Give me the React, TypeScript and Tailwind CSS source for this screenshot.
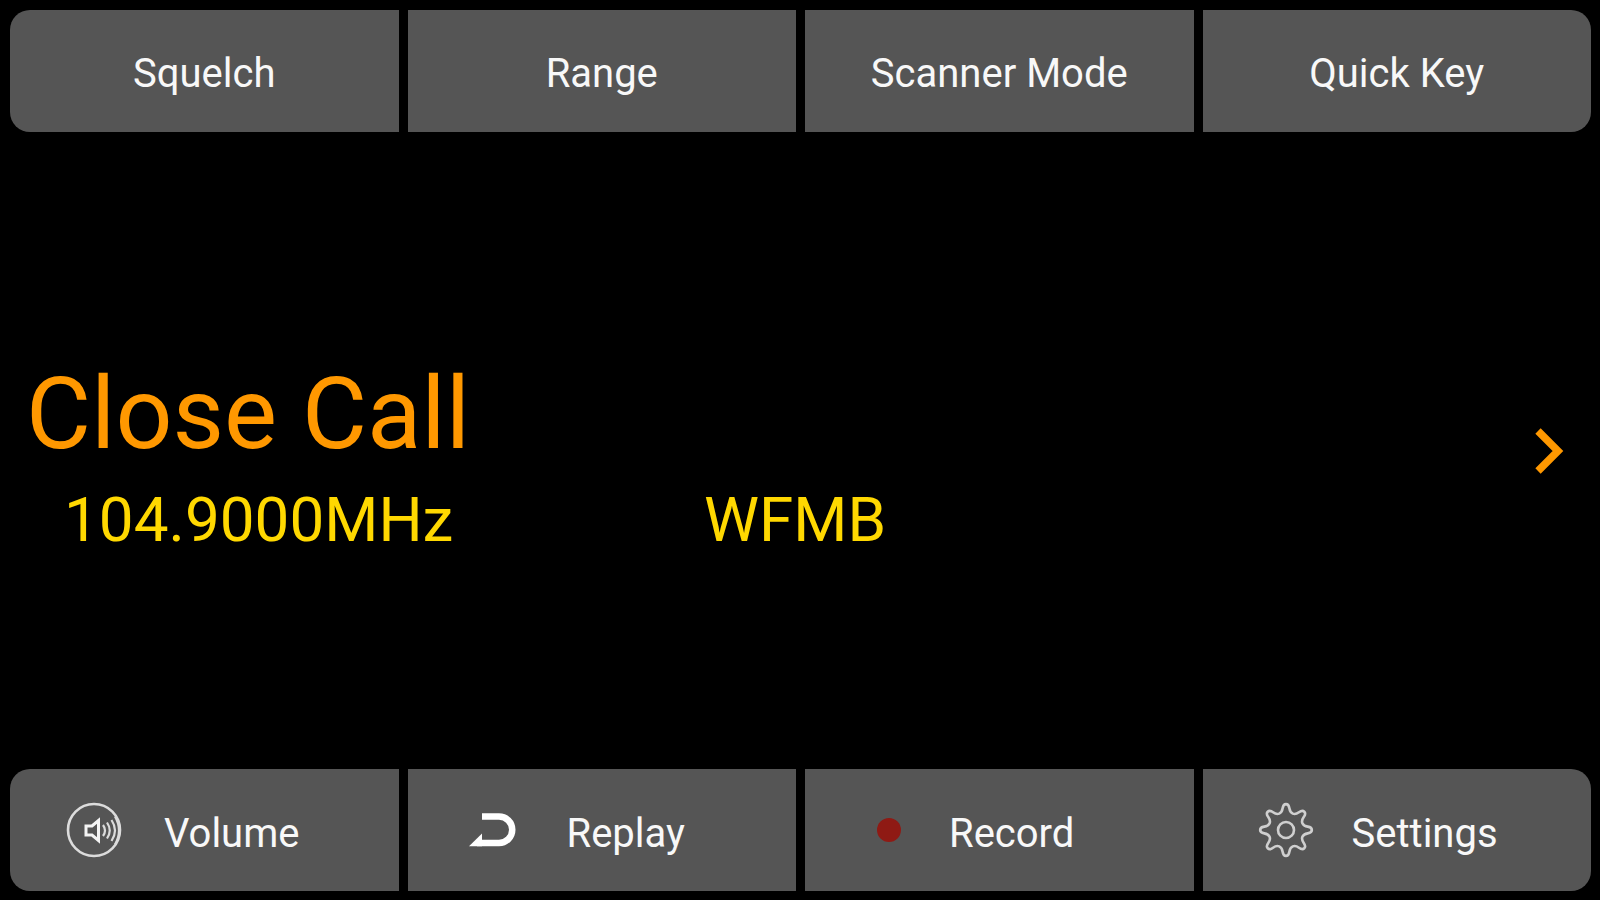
import React from "react";

const keyBase =
  "flex h-[122px] min-w-0 items-center bg-[#555555] text-[40px] leading-[48px] text-[#f8f8f8] whitespace-nowrap";
const topKey = `${keyBase} justify-center pt-1.5`;

function VolumeIcon() {
  return (
    <svg width="56" height="56" viewBox="0 0 56 56" fill="none" stroke="#dcdcdc" strokeWidth="2.6" aria-hidden="true">
      <circle cx="28" cy="28" r="26" />
      <path d="M20 24h6l6.5-5.5v20L26 33h-6z" stroke="#f4f4f4" strokeWidth="3" />
      <path d="M37 23q4 5.5 0 11M41 20.500q5.500 8 0 16M45.500 18q7 10.500 0 21M49 14.500q8 14 0 28" strokeWidth="2.2" />
    </svg>
  );
}

function ReplayIcon() {
  return (
    <svg width="48" height="36" viewBox="0 0 48 36" fill="none" stroke="#ffffff" strokeWidth="6.5" aria-hidden="true">
      <path d="M13 4.5H30a13.2 13.2 0 0 1 0 26.5H8" />
      <path d="M0 34.300L13 21.500V34.300z" fill="#ffffff" stroke="none" />
    </svg>
  );
}

/** Traces eight teeth, rounding every corner through the segment midpoints. */
function gearPath() {
  const points: number[][] = [];
  for (let tooth = 0; tooth < 8; tooth++) {
    for (const [r, offset] of [[18, -13], [26, -6], [26, 6], [18, 13]]) {
      const a = ((tooth * 45 + offset) * Math.PI) / 180;
      points.push([26 + r * Math.sin(a), 26 - r * Math.cos(a)]);
    }
  }
  const n = points.length;
  const mid = (i: number) => {
    const [p, q] = [points[i % n], points[(i + 1) % n]];
    return `${(p[0] + q[0]) / 2} ${(p[1] + q[1]) / 2}`;
  };
  let d = `M${mid(n - 1)}`;
  points.forEach((p, i) => {
    d += `Q${p[0]} ${p[1]} ${mid(i)}`;
  });
  return d + "Z";
}

function GearIcon() {
  return (
    <svg width="52" height="52" viewBox="0 0 52 52" fill="none" stroke="#cfcfcf" strokeWidth="2.6" className="overflow-visible" aria-hidden="true">
      <path d={gearPath()} />
      <circle cx="26" cy="26" r="8" />
    </svg>
  );
}

export default function App() {
  return (
    <div className="flex min-h-screen flex-col justify-between bg-black p-[9px] pt-[10px] pl-[10px] font-['Roboto',sans-serif]">
      <nav className="grid grid-cols-4 gap-[9px]">
        <button className={`${topKey} rounded-l-[20px]`}>Squelch</button>
        <button className={topKey}>Range</button>
        <button className={topKey}>Scanner Mode</button>
        <button className={`${topKey} rounded-r-[20px]`}>Quick Key</button>
      </nav>
      <main className="flex items-center justify-between pr-[26px] pl-4">
        <div className="pt-2">
          <h1 className="text-[100px] leading-[120px] text-[#ff9800]">Close Call</h1>
          <div className="mt-2.5 flex pl-[38px] text-[62px] leading-[72px] text-[#ffd800]">
            <span className="w-[640px]">104.9000MHz</span>
            <span>WFMB</span>
          </div>
        </div>
        <button aria-label="Next">
          <svg width="30" height="48" viewBox="0 0 30 48" fill="none" stroke="#ff9800" strokeWidth="7.5" aria-hidden="true">
            <path d="M3 4l20 20L3 44" />
          </svg>
        </button>
      </main>
      <footer className="grid grid-cols-4 gap-[9px]">
        <button className={`${keyBase} gap-[42px] rounded-l-[20px] pl-14`}>
          <VolumeIcon />
          <span className="pt-2">Volume</span>
        </button>
        <button className={`${keyBase} gap-[50px] pl-[61px]`}>
          <ReplayIcon />
          <span className="pt-2">Replay</span>
        </button>
        <button className={`${keyBase} gap-12 pl-[72px]`}>
          <span className="size-6 rounded-full bg-[#8f1a14]" />
          <span className="pt-2">Record</span>
        </button>
        <button className={`${keyBase} gap-10 rounded-r-[20px] pl-[57px]`}>
          <GearIcon />
          <span className="pt-2">Settings</span>
        </button>
      </footer>
    </div>
  );
}
